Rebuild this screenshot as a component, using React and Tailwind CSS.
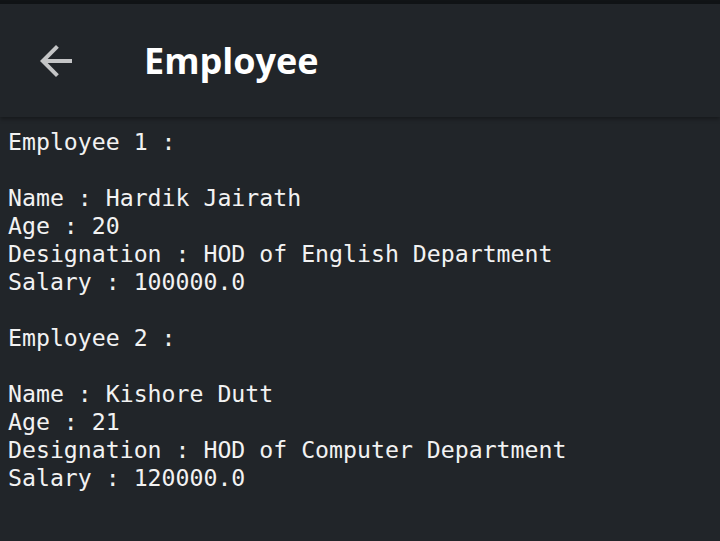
import React from "react";

const employees = [
  { name: "Hardik Jairath", age: 20, designation: "HOD of English Department", salary: "100000.0" },
  { name: "Kishore Dutt", age: 21, designation: "HOD of Computer Department", salary: "120000.0" },
];

const ArrowBack = () => (
  <svg width="48" height="48" viewBox="0 0 24 24" fill="#c4c5c6">
    <path d="M20 11H7.83l5.59-5.59L12 4l-8 8 8 8 1.41-1.41L7.83 13H20v-2z" />
  </svg>
);

export default function App() {
  return (
    <div className="w-[720px] h-[541px] overflow-hidden bg-[#212529] flex flex-col">
      <div className="h-[4px] bg-[#111416]" />
      <div className="h-[113px] flex items-center bg-[#212529] shadow-[0_2px_4px_rgba(0,0,0,0.35)] relative z-10">
        <div className="ml-[32px] flex items-center">
          <ArrowBack />
        </div>
        <h1
          className="ml-[64px] text-[36px] font-bold text-white leading-none"
          style={{ fontFamily: '"Open Sans", "Noto Sans", sans-serif' }}
        >
          Employee
        </h1>
      </div>
      <div
        className="pt-[11px] pl-[8px] text-[23.2px] leading-[28px] text-[#f2f2f2] whitespace-pre"
        style={{ fontFamily: '"DejaVu Sans Mono", monospace' }}
      >
        {employees.map((e, i) => (
          <div key={i}>
            <div>{`Employee ${i + 1} :`}</div>
            <div>{"\u00a0"}</div>
            <div>{`Name : ${e.name}`}</div>
            <div>{`Age : ${e.age}`}</div>
            <div>{`Designation : ${e.designation}`}</div>
            <div>{`Salary : ${e.salary}`}</div>
            {i < employees.length - 1 && <div>{"\u00a0"}</div>}
          </div>
        ))}
      </div>
    </div>
  );
}
